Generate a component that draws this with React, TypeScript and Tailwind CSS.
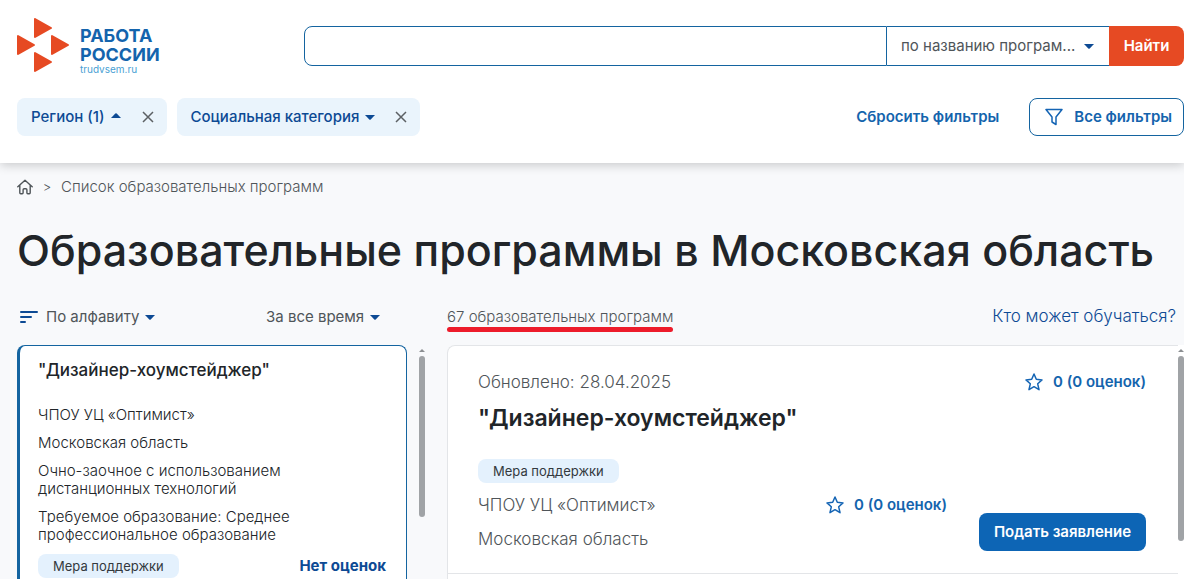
import type { ReactNode } from 'react';

interface Program {
  title: string;
  school: string;
  region: string;
  form: string;
  education: string;
  updated: string;
}

const program: Program = {
  title: '"Дизайнер-хоумстейджер"',
  school: 'ЧПОУ УЦ «Оптимист»',
  region: 'Московская область',
  form: 'Очно-заочное с использованием дистанционных технологий',
  education: 'Требуемое образование: Среднее профессиональное образование',
  updated: '28.04.2025',
};

function Caret({ up = false, className = '' }: { up?: boolean; className?: string }) {
  return (
    <svg viewBox="0 0 10 5" className={`h-[5px] w-2.5 shrink-0 ${className}`} fill="#0d4a94" aria-hidden="true">
      {up ? <path d="M0 5 4.3.5Q5 0 5.7.5L10 5Z" /> : <path d="M0 0h10L5.7 4.5Q5 5 4.3 4.5Z" />}
    </svg>
  );
}

function Star() {
  return (
    <svg viewBox="0 0 18 18" className="size-[18px] shrink-0" fill="none" stroke="#1464b4" strokeWidth="1.5" strokeLinejoin="round" aria-hidden="true">
      <path d="m9 1 2.3 5.3 5.7.6-4.3 3.9 1.3 5.9L9 13.7l-5 3 1.3-5.9L1 6.9l5.7-.6Z" />
    </svg>
  );
}

function Logo() {
  return (
    <a href="#" className="flex items-start gap-[11px]">
      <svg viewBox="0 0 52 54" className="h-[54px] w-[52px]" fill="#e64a23" stroke="#e64a23" strokeWidth="2" strokeLinejoin="round" aria-hidden="true">
        <path d="M18 1v18l16-9Z" />
        <path d="M1 18v18l16-9Z" />
        <path d="M35 18v18l16-9Z" />
        <path d="M18 35v18l16-9Z" />
      </svg>
      <span className="flex flex-col pt-2">
        <span className="text-lg leading-[19px] font-bold text-[#1464ad]">РАБОТА</span>
        <span className="text-lg leading-[19px] font-bold text-[#1464ad]">РОССИИ</span>
        <span className="text-[10px] leading-[10px] text-[#4a9fd4]">trudvsem.ru</span>
      </span>
    </a>
  );
}

function FilterChip({ label, open = false }: { label: string; open?: boolean }) {
  return (
    <div className="flex h-[38px] items-center rounded-lg bg-[#eaf4fc] pr-[13px] pl-3.5">
      <button type="button" className="flex items-center gap-1.5 text-[15px] font-medium text-[#0d4a94]" aria-expanded={open}>
        {label}
        <Caret up={open} className={open ? 'mr-[21px] mb-1' : 'mr-5'} />
      </button>
      <button type="button" aria-label={`Убрать фильтр: ${label}`}>
        <svg viewBox="0 0 12 12" className="size-3" fill="none" stroke="#5c6064" strokeWidth="1.5" aria-hidden="true">
          <path d="m1 1 10 10M11 1 1 11" />
        </svg>
      </button>
    </div>
  );
}

function SortSelect({ label, value }: { label: string; value: string }) {
  return (
    <span className="flex items-center gap-[5px]">
      <select aria-label={label} className="appearance-none text-[15px] text-[#4f5559]">
        <option>{value}</option>
      </select>
      <Caret />
    </span>
  );
}

function Badge({ children }: { children: ReactNode }) {
  return (
    <span className="flex h-6 w-fit items-center rounded-lg bg-[#e4f1fd] px-[15px] text-[13px] font-normal text-[#33393e]">
      {children}
    </span>
  );
}

function Rating() {
  return (
    <button type="button" className="flex items-center gap-2.5 text-[15px] leading-5 font-semibold text-[#1464ad]">
      <Star />
      0 (0 оценок)
    </button>
  );
}

function ScrollTrack({ thumb }: { thumb: string }) {
  return (
    <div className="flex w-1.5 shrink-0 flex-col items-center gap-1 pt-1" aria-hidden="true">
      <svg viewBox="0 0 6 3" className="h-[3px] w-1.5" fill="#8c8f92">
        <path d="M0 3 3 0l3 3Z" />
      </svg>
      <div className={`w-1.5 rounded-full bg-[#a0a3a6] ${thumb}`} />
    </div>
  );
}

function Header() {
  return (
    <header className="relative shrink-0 bg-white pb-[27px] pl-[17px] shadow-[0_2px_10px_rgba(0,0,0,0.2)]">
      <div className="flex items-start pt-[18px]">
        <div className="w-[287px] shrink-0">
          <Logo />
        </div>
        <form className="mt-2 flex h-10 flex-1" onSubmit={e => e.preventDefault()}>
          <input
            type="text"
            aria-label="Поиск"
            className="min-w-0 flex-1 rounded-l-lg border border-[#1464a0] px-3 text-[15px] outline-none"
          />
          <span className="flex w-[222px] items-center gap-2 border-y border-[#1464a0] pr-[15px] pl-3.5">
            <select aria-label="Где искать" className="min-w-0 flex-1 appearance-none text-[15px] text-[#4f5559]">
              <option>по названию програм...</option>
            </select>
            <Caret />
          </span>
          <button type="submit" className="w-[75px] rounded-r-lg bg-[#e64a23] text-[15px] font-semibold text-white">
            Найти
          </button>
        </form>
      </div>
      <div className="mt-6 flex items-center gap-2.5">
        <FilterChip label="Регион (1)" open />
        <FilterChip label="Социальная категория" />
        <button type="button" className="ml-auto text-[15px] font-semibold text-[#1464ad]">
          Сбросить фильтры
        </button>
        <button
          type="button"
          className="ml-5 flex h-[38px] items-center gap-[11px] rounded-lg border border-[#1464a0] pr-[11px] pl-[15px] text-[15px] font-semibold text-[#1464ad]"
        >
          <svg viewBox="0 0 18 18" className="size-[18px]" fill="none" stroke="#1464b4" strokeWidth="1.5" strokeLinejoin="round" aria-hidden="true">
            <path d="M1 1.5h16L11 9v7.5L7 14V9Z" />
          </svg>
          Все фильтры
        </button>
      </div>
    </header>
  );
}

function ProgramCard() {
  return (
    <article className="min-w-0 flex-1 rounded-t-lg border border-b-0 border-l-[3px] border-[#1464a0] bg-white pt-[15px] pr-5 pl-[18px] text-[15px] leading-[18px] font-light text-[#212529]">
      <h2 className="mb-[27px] text-[17px] leading-[18px] font-medium">{program.title}</h2>
      <div className="flex flex-col gap-2.5">
        <p>{program.school}</p>
        <p>{program.region}</p>
        <p className="max-w-[270px]">{program.form}</p>
        <p className="max-w-[270px]">{program.education}</p>
        <div className="flex items-center justify-between">
          <Badge>Мера поддержки</Badge>
          <span className="font-bold text-[#0d4a94]">Нет оценок</span>
        </div>
      </div>
    </article>
  );
}

function ProgramDetails() {
  return (
    <article className="min-w-0 flex-1 rounded-tl-lg border-t border-l border-[#e3e5e8] bg-white text-[17px] leading-5 font-light text-[#4f5559]">
      <div className="border-b border-[#e3e5e8] pt-[26px] pr-8 pb-[22px] pl-[30px]">
        <div className="flex items-center justify-between">
          <p>Обновлено: {program.updated}</p>
          <Rating />
        </div>
        <h2 className="mt-3 mb-[27px] text-[23px] leading-7 font-semibold text-[#212529]">{program.title}</h2>
        <Badge>Мера поддержки</Badge>
        <div className="mt-3 flex items-start gap-8">
          <div className="flex flex-1 flex-col gap-3.5">
            <p>{program.school}</p>
            <p>{program.region}</p>
          </div>
          <Rating />
          <button type="button" className="mt-[18px] h-[38px] w-[167px] rounded-lg bg-[#0d65b5] text-[15px] font-semibold text-white">
            Подать заявление
          </button>
        </div>
      </div>
    </article>
  );
}

export default function App() {
  return (
    <div className="flex h-screen flex-col overflow-hidden bg-[#f8f9fb] font-['Inter','Noto_Sans',sans-serif]">
      <Header />
      <main className="flex min-h-0 flex-1 flex-col pt-3.5 pl-[17px]">
        <nav aria-label="Навигация" className="flex items-center text-[15px] leading-5 font-light text-[#4f5559]">
          <a href="#" aria-label="Главная">
            <svg viewBox="0 0 16 16" className="size-4" fill="none" stroke="#4f5559" strokeWidth="1.4" strokeLinejoin="round" strokeLinecap="round" aria-hidden="true">
              <path d="M.8 7.7 8 1.2l7.2 6.5M2.8 6.2v7.6q0 .9.9.9h1.5q.9 0 .9-.9v-3.1q0-1 1-1h1.8q1 0 1 1v3.1q0 .9.9.9h1.5q.9 0 .9-.9V6.2" />
            </svg>
          </a>
          <span className="w-7 text-center text-[13px]">&gt;</span>
          <a href="#">Список образовательных программ</a>
        </nav>

        <h1 className="mt-[27px] text-[43px] leading-[52px] font-medium whitespace-nowrap text-[#212529]">
          Образовательные программы в Московская область
        </h1>

        <div className="mt-[31px] flex h-5 items-center">
          <div className="flex w-[430px] shrink-0 items-center">
            <svg viewBox="0 0 18 12" className="mr-2 ml-[3px] h-3 w-[18px]" fill="none" stroke="#0d4a94" strokeWidth="2" strokeLinecap="round" aria-hidden="true">
              <path d="M1 1h16M1 6h10M1 11h4" />
            </svg>
            <SortSelect label="Сортировка" value="По алфавиту" />
            <span className="ml-auto pr-[67px]">
              <SortSelect label="Период" value="За все время" />
            </span>
          </div>
          <p className="relative text-[15px] font-light text-[#4f5559]">
            67 образовательных программ
            <span className="absolute -bottom-1 left-0 h-[5px] w-full rounded-full bg-[#ed1c2b]" />
          </p>
          <a href="#" className="ml-auto pr-2 text-[17px] font-light text-[#0d4a94]">
            Кто может обучаться?
          </a>
        </div>

        <div className="mt-[18px] flex min-h-0 flex-1">
          <section className="flex w-[408px] shrink-0 gap-3">
            <ProgramCard />
            <ScrollTrack thumb="h-[161px]" />
          </section>
          <section className="ml-[22px] flex min-w-0 flex-1 rounded-tl-lg bg-white">
            <ProgramDetails />
            <ScrollTrack thumb="h-[185px]" />
          </section>
        </div>
      </main>
    </div>
  );
}
